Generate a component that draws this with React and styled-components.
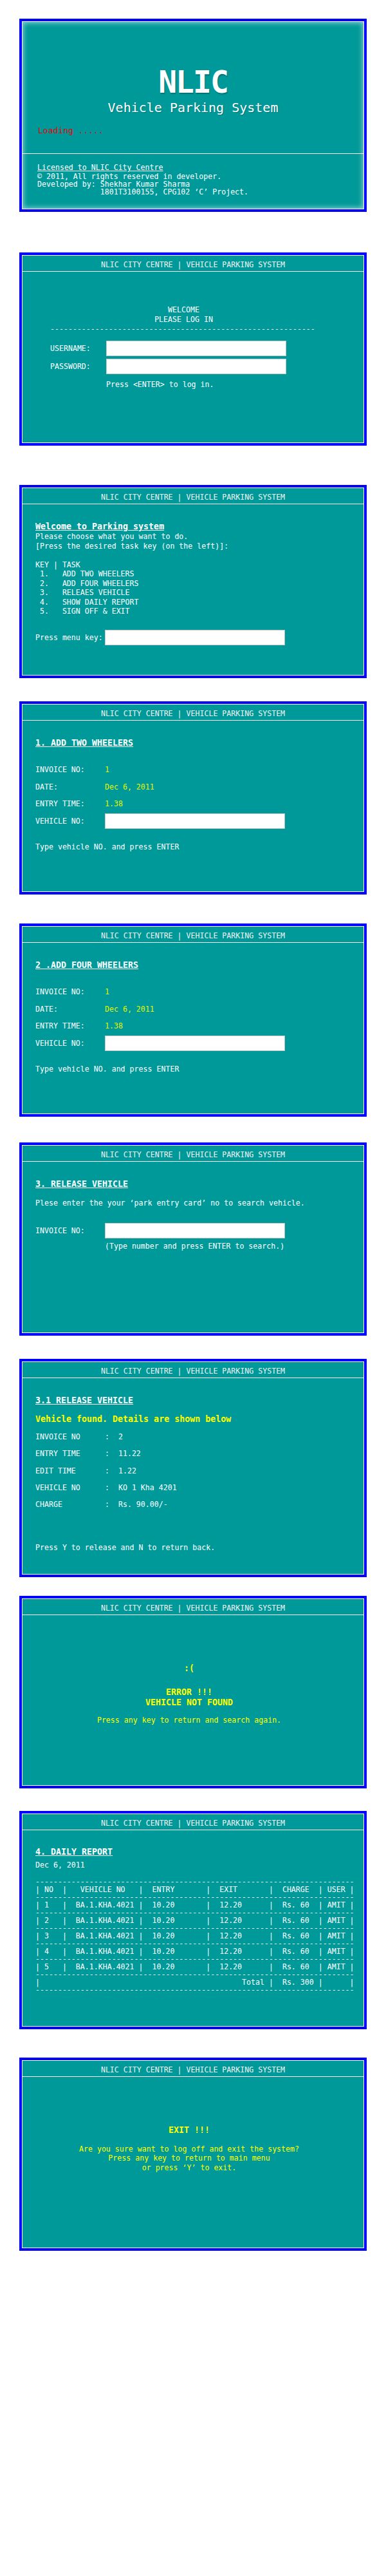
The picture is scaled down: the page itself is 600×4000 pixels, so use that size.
import React from 'react'
import styled, { createGlobalStyle } from 'styled-components'

const teal = '#009999'
const blue = '#0000ff'
const yellow = '#ffff00'
const lime = '#e2f500'

const GlobalStyle = createGlobalStyle`
  body {
    margin: 0;
    background: #fff;
    font-family: "DejaVu Sans Mono", monospace;
  }
`

const Page = styled.div`
  display: flex;
  flex-direction: column;
  align-items: center;
  padding-top: 29px;
`

const Screen = styled.div`
  box-sizing: border-box;
  width: 540px;
  height: ${props => props.$h}px;
  margin-bottom: ${props => props.$gap || 0}px;
  border: 4px solid ${blue};
  background: ${teal};
  box-shadow: inset 0 0 0 1px #fff${props => props.$glow ? ', inset 0 0 7px 3px rgba(255,255,255,0.5)' : ''};
  color: #fff;
  font-size: 11.6px;
  display: flex;
  flex-direction: column;
  overflow: hidden;
`

const Header = styled.div`
  box-sizing: border-box;
  height: 26px;
  padding-top: 5px;
  border-bottom: 1px solid #fff;
  text-align: center;
  line-height: 20px;
  white-space: pre;
  color: #f2f2f2;
`

const Body = styled.div`
  padding: 0 33px 0 21px;
  display: flex;
  flex-direction: column;
  align-items: ${props => props.$center ? 'center' : 'flex-start'};
  text-align: ${props => props.$center ? 'center' : 'left'};
`

/* splash */
const Logo = styled.div`
  margin-top: 70px;
  font-size: 48px;
  line-height: 48px;
  font-weight: bold;
  letter-spacing: -2px;
  text-align: center;
  text-shadow: 1px 2px 1px rgba(0, 0, 0, 0.25);
`

const Subtitle = styled.div`
  margin-top: 4px;
  font-size: 20px;
  line-height: 24px;
  text-align: center;
  text-shadow: 1px 1px 1px rgba(0, 0, 0, 0.25);
`

const Loading = styled.div`
  margin-top: 16px;
  padding-left: 25px;
  font-size: 13px;
  line-height: 16px;
  color: #e80000;
  white-space: pre;
`

const Rule = styled.div`
  margin-top: 27px;
  height: 1px;
  background: #fff;
`

const Footer = styled.div`
  margin-top: 13px;
  padding-left: 24px;
`

const Licensed = styled.div`
  line-height: 16px;
  text-decoration: underline;
`

/* shared text */
const Text = styled.div`
  margin-top: ${props => props.$mt || 0}px;
  padding-left: ${props => props.$indent || 0}px;
  line-height: ${props => props.$lh || 14}px;
  color: ${props => props.$color || 'inherit'};
  white-space: pre;
`

const Title = styled.div`
  margin-top: ${props => props.$mt ?? 27}px;
  font-size: 13.3px;
  font-weight: bold;
  line-height: 16px;
  text-decoration: underline;
  text-decoration-thickness: 1px;
  white-space: pre;
`

const Alert = styled.div`
  margin-top: ${props => props.$mt || 0}px;
  font-size: 13.3px;
  font-weight: bold;
  line-height: 16px;
  color: ${yellow};
  white-space: pre;
`

/* login */
const LoginBlock = styled.div`
  margin-left: 23px;
  width: 415px;
  display: flex;
  flex-direction: column;
`

const Centered = styled.div`
  margin-top: ${props => props.$mt || 0}px;
  line-height: 15px;
  text-align: center;
  white-space: pre;
`

const Dashes = styled.div`
  line-height: 14px;
  white-space: pre;
  overflow: hidden;
`

/* form rows */
const Rows = styled.div`
  margin-top: ${props => props.$mt || 0}px;
  display: flex;
  flex-direction: column;
  gap: 2.5px;
`

const FieldRow = styled.div`
  margin-top: ${props => props.$mt || 0}px;
  height: 24px;
  display: flex;
  align-items: center;
  gap: ${props => props.$gap || 0}px;
  white-space: pre;
`

const Label = styled.span`
  width: ${props => props.$w ? props.$w + 'px' : 'auto'};
  flex-shrink: 0;
`

const Value = styled.span`
  color: ${lime};
`

const Field = styled.input`
  box-sizing: border-box;
  width: 280px;
  height: 24px;
  margin: 0;
  padding: 0 4px;
  border: 1px solid #c8c8c8;
  background: #fff;
  outline: none;
`

const DetailRow = styled.div`
  display: flex;
  line-height: 26.25px;
  white-space: pre;
`

const Details = styled.div`
  margin-top: ${props => props.$mt || 0}px;
`

const Report = styled.pre`
  margin: 13px 0 0;
  font-family: inherit;
  font-size: inherit;
  line-height: 12px;
`

const pad = (s, n) => s + ' '.repeat(Math.max(0, n - s.length))

const dash = '-'.repeat(71)
const reportRows = [1, 2, 3, 4, 5]
const reportLines = [
  dash,
  '| NO  |   VEHICLE NO   |  ENTRY       |  EXIT       |  CHARGE  | USER |',
  dash,
  ...reportRows.flatMap(n => [
    '| ' + pad(String(n), 4) + '|  BA.1.KHA.4021 |  10.20       |  12.20      |  Rs. 60  | AMIT |',
    dash,
  ]),
  '|' + ' '.repeat(45) + 'Total |  Rs. 300 |      |',
  dash,
]

const menu = [
  'Please choose what you want to do.',
  '[Press the desired task key (on the left)]:',
  ' ',
  'KEY | TASK',
  ' 1.   ADD TWO WHEELERS',
  ' 2.   ADD FOUR WHEELERS',
  ' 3.   RELEAES VEHICLE',
  ' 4.   SHOW DAILY REPORT',
  ' 5.   SIGN OFF & EXIT',
]

const details = [
  ['INVOICE NO', '2'],
  ['ENTRY TIME', '11.22'],
  ['EDIT TIME', '1.22'],
  ['VEHICLE NO', 'KO 1 Kha 4201'],
  ['CHARGE', 'Rs. 90.00/-'],
]

const HEADER = 'NLIC CITY CENTRE | VEHICLE PARKING SYSTEM'

function AddScreen({ title, gap }) {
  return (
    <Screen $h={300} $gap={gap}>
      <Header>{HEADER}</Header>
      <Body>
        <Title>{title}</Title>
        <Rows $mt={21}>
          <FieldRow><Label $w={108}>INVOICE NO:</Label><Value>1</Value></FieldRow>
          <FieldRow><Label $w={108}>DATE:</Label><Value>Dec 6, 2011</Value></FieldRow>
          <FieldRow><Label $w={108}>ENTRY TIME:</Label><Value>1.38</Value></FieldRow>
          <FieldRow><Label $w={108}>VEHICLE NO:</Label><Field readOnly /></FieldRow>
        </Rows>
        <Text $mt={21.5}>Type vehicle NO. and press ENTER</Text>
      </Body>
    </Screen>
  )
}

export default function App() {
  return (
    <>
      <GlobalStyle />
      <Page>
        {/* splash */}
        <Screen $h={300} $gap={63} $glow>
          <Logo>NLIC</Logo>
          <Subtitle>Vehicle Parking System</Subtitle>
          <Loading>Loading .....</Loading>
          <Rule />
          <Footer>
            <Licensed>Licensed to NLIC City Centre</Licensed>
            <Text $lh={12}>© 2011, All rights reserved in developer.</Text>
            <Text $lh={12}>Developed by: Shekhar Kumar Sharma</Text>
            <Text $lh={12}>{'              1801T3100155, CPG102 ‘C’ Project.'}</Text>
          </Footer>
        </Screen>

        {/* login */}
        <Screen $h={300} $gap={61}>
          <Header>{HEADER}</Header>
          <Body>
            <LoginBlock>
              <Centered $mt={52}>WELCOME</Centered>
              <Centered>PLEASE LOG IN</Centered>
              <Dashes>{'-'.repeat(59)}</Dashes>
              <FieldRow $mt={11}><Label $w={87}>USERNAME:</Label><Field readOnly /></FieldRow>
              <FieldRow $mt={4}><Label $w={87}>PASSWORD:</Label><Field readOnly type="password" /></FieldRow>
              <Text $mt={9} $indent={87}>{'Press <ENTER> to log in.'}</Text>
            </LoginBlock>
          </Body>
        </Screen>

        {/* main menu */}
        <Screen $h={300} $gap={36}>
          <Header>{HEADER}</Header>
          <Body>
            <Title>Welcome to Parking system</Title>
            {menu.map((line, i) => <Text key={i} $lh={14.5}>{line}</Text>)}
            <FieldRow $mt={21.5} $gap={3}><Label>Press menu key:</Label><Field readOnly /></FieldRow>
          </Body>
        </Screen>

        <AddScreen title="1. ADD TWO WHEELERS" gap={45} />
        <AddScreen title="2 .ADD FOUR WHEELERS" gap={40} />

        {/* release */}
        <Screen $h={300} $gap={36}>
          <Header>{HEADER}</Header>
          <Body>
            <Title>3. RELEASE VEHICLE</Title>
            <Text $mt={14}>Plese enter the your ‘park entry card’ no to search vehicle.</Text>
            <FieldRow $mt={24}><Label $w={108}>INVOICE NO:</Label><Field readOnly /></FieldRow>
            <Text $mt={5} $indent={108}>(Type number and press ENTER to search.)</Text>
          </Body>
        </Screen>

        {/* vehicle found */}
        <Screen $h={339} $gap={29}>
          <Header>{HEADER}</Header>
          <Body>
            <Title>3.1 RELEASE VEHICLE</Title>
            <Alert $mt={13}>Vehicle found. Details are shown below</Alert>
            <Details $mt={6}>
              {details.map(([k, v]) => (
                <DetailRow key={k}><Label $w={108}>{k}</Label><span>{':  ' + v}</span></DetailRow>
              ))}
            </Details>
            <Text $mt={47}>Press Y to release and N to return back.</Text>
          </Body>
        </Screen>

        {/* not found */}
        <Screen $h={299} $gap={35}>
          <Header>{HEADER}</Header>
          <Body $center>
            <Alert $mt={75}>:(</Alert>
            <Alert $mt={21}>ERROR !!!</Alert>
            <Alert>VEHICLE NOT FOUND</Alert>
            <Text $mt={12} $color={yellow}>Press any key to return and search again.</Text>
          </Body>
        </Screen>

        {/* daily report */}
        <Screen $h={339} $gap={44}>
          <Header>{HEADER}</Header>
          <Body>
            <Title $mt={26}>4. DAILY REPORT</Title>
            <Text $mt={5}>Dec 6, 2011</Text>
            <Report>{reportLines.join('\n')}</Report>
          </Body>
        </Screen>

        {/* exit */}
        <Screen $h={300}>
          <Header>{HEADER}</Header>
          <Body $center>
            <Alert $mt={75}>EXIT !!!</Alert>
            <Text $mt={13.75} $lh={14.5} $color={yellow}>Are you sure want to log off and exit the system?</Text>
            <Text $lh={14.5} $color={yellow}>Press any key to return to main menu</Text>
            <Text $lh={14.5} $color={yellow}>or press ‘Y’ to exit.</Text>
          </Body>
        </Screen>
      </Page>
    </>
  )
}
